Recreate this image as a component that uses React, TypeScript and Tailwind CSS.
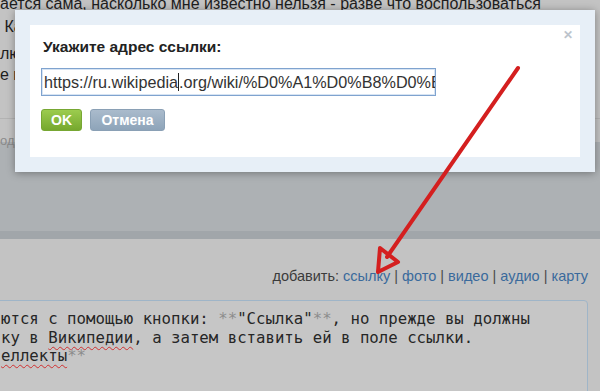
import React from 'react';

const Squiggle = ({ children }: { children: React.ReactNode }) => (
  <span className="underline decoration-wavy decoration-[#d03030] decoration-1 underline-offset-[3px]">{children}</span>
);

const App = () => {
  const links = ['ссылку', 'фото', 'видео', 'аудио', 'карту'];
  return (
    <div className="relative w-[600px] h-[391px] overflow-hidden bg-[#c3c3c3] font-['Liberation_Sans',Arial,sans-serif]">
      {/* Page behind the overlay */}
      <section className="h-[150px] text-[16px] leading-[24px] text-[#1e1e1e]">
        <div className="-mt-[8px] whitespace-nowrap">
          <p>ается сама, насколько мне известно нельзя - разве что воспользоваться</p>
          <p className="mt-[-1px]">&nbsp;Как вариант, можно вставить ссылку вручную.</p>
          <p className="mt-[3px]">лючение ссылки в тексте сообщения</p>
          <p className="-mt-[3px]">е по умолчанию</p>
        </div>
        <div className="mt-[31px] border-t border-[#b3b3b3] pt-[14px] text-[13px] leading-[16px] text-[#8a8a8a]">
          одробнее
        </div>
      </section>

      <section className="h-[97px] bg-[#adb1b4] border-b-[8px] border-[#a1a6aa]" />

      <section className="pt-[28px]">
        <p className="text-right pr-[12px] text-[14.5px] leading-[18px] text-[#3b3b3b] whitespace-nowrap">
          добавить:{' '}
          {links.map((l, i) => (
            <React.Fragment key={l}>
              {i > 0 && <span className="text-[#4a4a4a]">{' | '}</span>}
              <span className="text-[#3a6a9c]">{l}</span>
            </React.Fragment>
          ))}
        </p>
        <div className="mt-[15px] -ml-[10px] mr-[12px] h-[120px] border border-[#9fb5c8] rounded-tr-[4px] bg-[#c6c6c6] pl-[10px] pt-[9px] font-['DejaVu_Sans_Mono',monospace] text-[15.7px] leading-[18.5px] text-[#262626] whitespace-pre">
          <div>ются с помощью кнопки: <span className="text-[#8c8c8c]">**</span>"Ссылка"<span className="text-[#8c8c8c]">**</span>, но прежде вы должны</div>
          <div>ку в <Squiggle>Википедии</Squiggle>, а затем вставить ей в поле ссылки.</div>
          <div><Squiggle>еллекты</Squiggle><span className="text-[#8c8c8c]">**</span></div>
        </div>
      </section>

      {/* Modal */}
      <div className="absolute left-[15px] top-[10px] w-[580px] h-[162px] bg-[#e7eff7] p-[15px] shadow-[0_1px_8px_rgba(0,0,0,0.35)]">
        <div className="relative h-full bg-white pl-[11px] pt-[12px]">
          <div className="absolute right-[7px] top-[4px] text-[#bcc4cc] text-[12px] leading-none font-bold">✕</div>
          <h2 className="pl-[2px] text-[15.5px] leading-[19px] font-bold text-[#222]">Укажите адрес ссылки:</h2>
          <div className="mt-[12px] w-[395px] h-[28px] border border-[#7fa3cf] shadow-[inset_0_0_0_1px_#d7e4f3] flex items-center px-[2px] text-[16.2px] text-[#333] overflow-hidden whitespace-nowrap">
            https://ru.wikipedia<span className="inline-block shrink-0 w-px h-[18px] bg-[#222]" />.org/wiki/%D0%A1%D0%B8%D0%B0%D0%BB
          </div>
          <div className="mt-[13px] flex gap-[8px]">
            <button className="w-[41px] h-[22px] rounded-[3px] bg-gradient-to-b from-[#9ccc4e] to-[#76a82e] border border-[#77a733] text-white text-[14px] font-bold">OK</button>
            <button className="w-[75px] h-[22px] rounded-[3px] bg-gradient-to-b from-[#aabbcc] to-[#8ea4b9] border border-[#8aa0b5] text-white text-[14px] font-bold">Отмена</button>
          </div>
        </div>
      </div>

      {/* Red arrow drawn over the page */}
      <svg className="absolute inset-0 pointer-events-none" width="600" height="391" viewBox="0 0 600 391">
        <line x1="518" y1="68" x2="387" y2="257" stroke="#d41f1f" strokeWidth="4" strokeLinecap="round" />
        <polygon points="380,248 398,262 378,272" fill="none" stroke="#d41f1f" strokeWidth="4" strokeLinejoin="round" />
      </svg>
    </div>
  );
};

export default App;
